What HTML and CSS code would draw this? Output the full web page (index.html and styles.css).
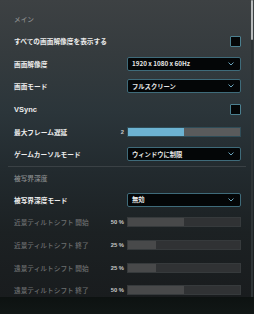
FILE: index.html
```html
<!DOCTYPE html>
<html lang="ja">
<head>
<meta charset="utf-8">
<link rel="stylesheet" href="styles.css">
</head>
<body>
<div class="app">
  <div class="scroller">
    <div class="content">
      <div class="section-title">メイン</div>
      <div class="row">
        <span class="label">すべての画面解像度を表示する</span>
        <span class="ctrl end"><span class="checkbox"></span></span>
      </div>
      <div class="row">
        <span class="label">画面解像度</span>
        <span class="ctrl"><span class="select"><span>1920 x 1080 x 60Hz</span><svg class="chev" viewBox="0 0 6 4" width="6" height="4"><polyline points="0.5,0.5 3,3 5.5,0.5" /></svg></span></span>
      </div>
      <div class="row">
        <span class="label">画面モード</span>
        <span class="ctrl"><span class="select"><span>フルスクリーン</span><svg class="chev" viewBox="0 0 6 4" width="6" height="4"><polyline points="0.5,0.5 3,3 5.5,0.5" /></svg></span></span>
      </div>
      <div class="row">
        <span class="label latin">VSync</span>
        <span class="ctrl end"><span class="checkbox"></span></span>
      </div>
      <div class="row">
        <span class="label">最大フレーム遅延</span>
        <span class="value">2</span>
        <span class="ctrl"><span class="slider"><span class="fill" style="width:50%"></span></span></span>
      </div>
      <div class="row">
        <span class="label">ゲームカーソルモード</span>
        <span class="ctrl"><span class="select"><span>ウィンドウに制限</span><svg class="chev" viewBox="0 0 6 4" width="6" height="4"><polyline points="0.5,0.5 3,3 5.5,0.5" /></svg></span></span>
      </div>
      <div class="divider"></div>
      <div class="section-title">被写界深度</div>
      <div class="row">
        <span class="label">被写界深度モード</span>
        <span class="ctrl"><span class="select"><span>無効</span><svg class="chev" viewBox="0 0 6 4" width="6" height="4"><polyline points="0.5,0.5 3,3 5.5,0.5" /></svg></span></span>
      </div>
      <div class="row disabled">
        <span class="label">近景ティルトシフト 開始</span>
        <span class="value">50 %</span>
        <span class="ctrl"><span class="slider off"><span class="fill" style="width:50%"></span></span></span>
      </div>
      <div class="row disabled">
        <span class="label">近景ティルトシフト 終了</span>
        <span class="value">25 %</span>
        <span class="ctrl"><span class="slider off"><span class="fill" style="width:25%"></span></span></span>
      </div>
      <div class="row disabled">
        <span class="label">遠景ティルトシフト 開始</span>
        <span class="value">25 %</span>
        <span class="ctrl"><span class="slider off"><span class="fill" style="width:25%"></span></span></span>
      </div>
      <div class="row disabled">
        <span class="label">遠景ティルトシフト 終了</span>
        <span class="value">50 %</span>
        <span class="ctrl"><span class="slider off"><span class="fill" style="width:50%"></span></span></span>
      </div>
    </div>
    <div class="scrollbar"><div class="thumb"></div></div>
  </div>
  <div class="footer"></div>
</div>
</body>
</html>
```

FILE: styles.css
```css
* { box-sizing: border-box; }
html, body { margin: 0; padding: 0; }
body {
  width: 254px;
  height: 314px;
  overflow: hidden;
  font-family: "Noto Sans CJK JP", "Noto Sans", sans-serif;
  background: #181c1e;
}
.app {
  display: flex;
  flex-direction: column;
  height: 314px;
}
.scroller {
  display: flex;
  height: 297px;
  overflow: hidden;
  background: linear-gradient(180deg, #3d4143 0%, #353b3e 18%, #2b353a 38%, #222a2e 58%, #1c2123 78%, #191c1e 100%);
}
.content {
  width: 250px;
  padding: 8px 9px 0 14px;
}
.section-title {
  height: 22px;
  display: flex;
  align-items: center;
  font-size: 6.7px;
  font-weight: 500;
  color: #8a8c8d;
}
.row {
  height: 22.6px;
  display: flex;
  align-items: center;
}
.label {
  flex: 1;
  font-size: 6.7px;
  font-weight: 700;
  color: #ececec;
  white-space: nowrap;
}
.label.latin { font-family: "Liberation Sans", "Noto Sans", sans-serif; font-size: 7.5px; }
.value {
  font-family: "Liberation Sans", "Noto Sans", sans-serif;
  font-size: 5.8px;
  font-weight: 700;
  color: #c8c8c8;
  margin-right: 3px;
}
.ctrl {
  width: 114px;
  display: flex;
}
.ctrl.end { justify-content: flex-end; }
.checkbox {
  width: 11px;
  height: 11px;
  border: 1px solid #4c8090;
  border-radius: 1px;
  background: #040607;
}
.select {
  width: 114px;
  height: 14px;
  display: flex;
  align-items: center;
  justify-content: space-between;
  padding: 0 6px 0 4px;
  border: 1px solid #3f6b7a;
  border-radius: 2px;
  background: #040607;
  font-size: 6.3px;
  font-weight: 700;
  color: #e6e6e6;
}
.chev polyline {
  fill: none;
  stroke: #6aa5bd;
  stroke-width: 1;
}
.slider {
  width: 114px;
  height: 10px;
  display: flex;
  border: 1px solid #2f4c57;
  background: #5a5b5c;
}
.slider .fill { background: #6db3d2; height: 100%; }
.slider.off { border-color: #363a3c; background: #303234; }
.slider.off .fill { background: #48494a; }
.row.disabled .label { color: #6c6e6f; font-weight: 500; }
.divider {
  height: 1px;
  margin-left: -6px;
  margin-right: -5px;
  background: #3a4145;
}
.scrollbar {
  width: 4px;
  display: flex;
  justify-content: flex-start;
  background: linear-gradient(90deg, transparent 0 1px, #2e3436 1px 3px, transparent 3px);
}
.thumb {
  margin-left: 0.5px;
  width: 2.5px;
  height: 40px;
  background: #b9bcbd;
  border-radius: 1px;
}
.footer {
  height: 17px;
  background: linear-gradient(180deg, #0d1211, #111716);
}
```
